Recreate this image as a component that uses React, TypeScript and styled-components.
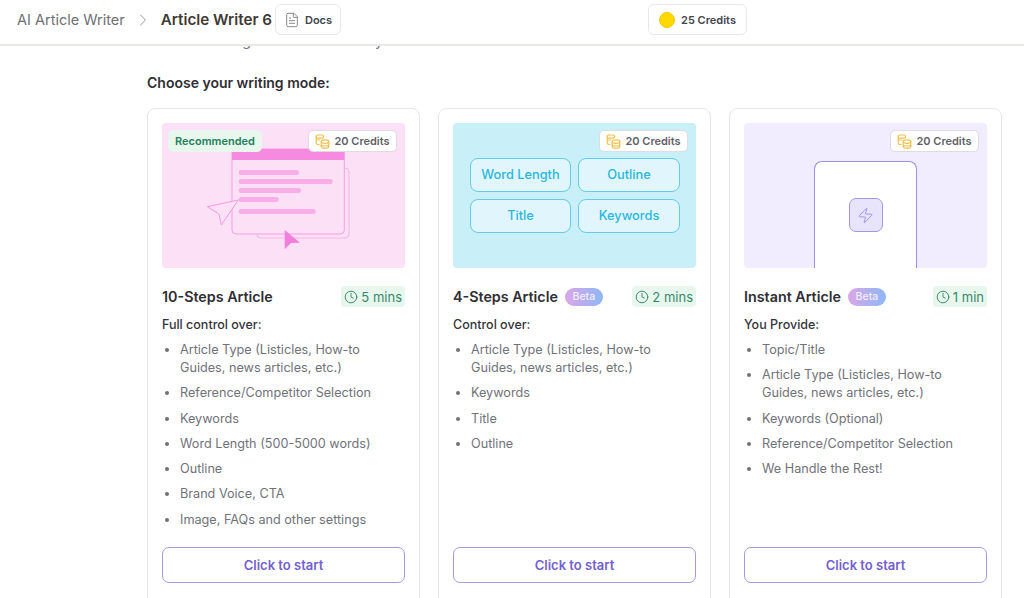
import React from "react";
import styled, { createGlobalStyle } from "styled-components";
import { ChevronRight, Clock, FileText, Zap } from "lucide-react";

const Global = createGlobalStyle`
  html, body { margin: 0; padding: 0; height: 100%; overflow: hidden; background: #fff; }
  body { font-family: Inter, "Liberation Sans", sans-serif; -webkit-font-smoothing: antialiased; }
  #root { height: 100%; }
  * { box-sizing: border-box; }
`;

const Page = styled.div`
  height: 598px;
  width: 1024px;
  display: flex;
  flex-direction: column;
  overflow: hidden;
`;
const Header = styled.header`
  flex: none;
  height: 46px;
  display: grid;
  grid-template-columns: 648px auto;
  align-items: start;
  padding-top: 4px;
  border-bottom: 2px solid #e9e9e6;
  background: #fff;
`;
const Crumbs = styled.div`
  display: flex;
  align-items: center;
  height: 31px;
  padding-left: 17px;
`;
const CrumbRoot = styled.span`
  font-size: 14.5px;
  color: #6f7074;
`;
const CrumbArrow = styled.span`
  display: flex;
  margin: 0 8px 0 8px;
  color: #8b8b8f;
`;
const CrumbCurrent = styled.span`
  font-size: 15.2px;
  font-weight: 600;
  color: #3f3a34;
  margin-right: 3px;
`;
const HeaderButton = styled.div<{ $w: number; $gap: number }>`
  width: ${(p) => p.$w}px;
  height: 31px;
  display: flex;
  align-items: center;
  justify-content: center;
  gap: ${(p) => p.$gap}px;
  border: 1px solid #e8e8ea;
  border-radius: 6px;
  font-size: 11px;
  font-weight: 600;
  color: #44444c;
  background: #fff;
`;
const Coin = styled.span`
  width: 16px;
  height: 16px;
  border-radius: 50%;
  background: #ffd800;
  border: 1px solid #f6ca00;
`;
const Main = styled.main`
  flex: 1;
  overflow: hidden;
  padding-left: 147px;
`;
const Clipped = styled.div`
  margin-top: -14px;
  height: 18px;
  line-height: 17px;
  font-size: 14px;
  color: #6b7280;
  white-space: nowrap;
`;
const Heading = styled.h2`
  margin: 24px 0 16px;
  font-size: 14px;
  line-height: 18px;
  font-weight: 600;
  color: #2f2f33;
`;
const Cards = styled.div`
  display: flex;
  gap: 18px;
`;
const Card = styled.section`
  width: 273px;
  height: 510px;
  flex: none;
  display: flex;
  flex-direction: column;
  padding: 14px 14px 0 14px;
  border: 1px solid #e7e7e9;
  border-radius: 8px;
  background: #fff;
`;
const Art = styled.div<{ $bg: string }>`
  position: relative;
  flex: none;
  height: 145px;
  border-radius: 4px;
  background: ${(p) => p.$bg};
  overflow: hidden;
`;
const CreditTag = styled.div`
  position: absolute;
  top: 7px;
  right: 8px;
  width: 89px;
  height: 22px;
  display: flex;
  align-items: center;
  justify-content: center;
  gap: 4px;
  border: 1px solid #dcdce2;
  border-radius: 5px;
  background: #fff;
  font-size: 11px;
  font-weight: 600;
  color: #5f5f68;
`;
const RecommendedTag = styled.div`
  position: absolute;
  top: 7px;
  left: 6px;
  width: 94px;
  height: 22px;
  display: flex;
  align-items: center;
  justify-content: center;
  border-radius: 5px;
  background: #e8f7ee;
  font-size: 11px;
  font-weight: 600;
  color: #23805a;
`;
const Illustration = styled.svg`
  display: block;
`;
const Chips = styled.div`
  display: grid;
  grid-template-columns: 101px 102px;
  grid-auto-rows: 34px;
  gap: 7px 7px;
  padding: 35px 0 0 17px;
`;
const Chip = styled.div`
  display: flex;
  align-items: center;
  justify-content: center;
  padding-bottom: 1px;
  border: 1px solid #62cce9;
  border-radius: 8px;
  background: #e0f6fc;
  font-size: 12.8px;
  font-weight: 500;
  color: #2cb6dc;
`;
const Frame = styled.div`
  width: 103px;
  height: 107px;
  margin: 38px auto 0;
  padding-top: 36px;
  display: flex;
  justify-content: center;
  align-items: flex-start;
  border: 1px solid #9d8ee6;
  border-bottom: none;
  border-radius: 8px 8px 0 0;
  background: #fff;
`;
const BoltBox = styled.div`
  width: 34px;
  height: 34px;
  display: flex;
  align-items: center;
  justify-content: center;
  border: 1px solid #a496e6;
  border-radius: 7px;
  background: #e8e4fc;
  color: #9486e0;
`;
const TitleRow = styled.div`
  flex: none;
  display: flex;
  align-items: center;
  height: 21px;
  margin-top: 18px;
`;
const CardTitle = styled.h3`
  margin: 0;
  font-size: 14.3px;
  font-weight: 600;
  color: #2f2f35;
`;
const Beta = styled.span`
  margin-left: 7px;
  width: 38px;
  height: 18px;
  display: flex;
  align-items: center;
  justify-content: center;
  border-radius: 9px;
  background: linear-gradient(90deg, #dba6e8, #8db8f6);
  color: #f3ecfd;
  font-size: 10.5px;
  font-weight: 500;
`;
const Time = styled.span`
  margin-left: auto;
  height: 21px;
  padding: 0 3px;
  display: flex;
  align-items: center;
  gap: 3px;
  border-radius: 4px;
  background: #e8f7ee;
  color: #37896a;
  font-size: 13px;
`;
const Lead = styled.p`
  margin: 9px 0 0;
  flex: none;
  font-size: 12.5px;
  line-height: 18px;
  font-weight: 500;
  color: #34343a;
`;
const Items = styled.ul`
  flex: none;
  height: 195px;
  margin: 7px 0 0;
  padding: 0 0 0 18px;
  font-size: 12.65px;
  line-height: 18px;
  color: #70727a;
`;
const Item = styled.li`
  margin-bottom: 7.3px;
  &::marker { color: #70727a; }
`;
const Start = styled.button`
  flex: none;
  height: 36px;
  margin-top: 11px;
  border: 1px solid #a598e6;
  border-radius: 7px;
  background: #fff;
  font-family: inherit;
  font-size: 13px;
  font-weight: 600;
  color: #7360cf;
`;

const CreditsIcon = () => (
  <svg width="15" height="15" viewBox="0 0 15 15" fill="none" stroke="#f0c04e" strokeWidth="1.2">
    <rect x="1.2" y="1" width="7.5" height="3.2" rx="1.6" />
    <path d="M1.2 2.6v6.5c0 .8.7 1.4 1.5 1.4h1.8M1.2 6h4" />
    <ellipse cx="10" cy="7.6" rx="3.8" ry="1.8" />
    <path d="M6.2 7.6v4.8c0 1 1.7 1.8 3.8 1.8s3.8-.8 3.8-1.8V7.6M6.2 10.2c0 1 1.700 1.8 3.8 1.8s3.8-.8 3.8-1.8" />
  </svg>
);

const WindowArt = () => (
  <Illustration width="243" height="145" viewBox="0 0 243 145" fill="none">
    <rect x="94.7" y="45" width="92.3" height="70" rx="4" stroke="#f8b4e8" strokeWidth="1" />
    <rect x="70" y="26" width="112.3" height="85" rx="4" fill="#fbe0f6" stroke="#f69fe2" strokeWidth="1" />
    <path d="M70 37V30a4 4 0 0 1 4-4h104.300a4 4 0 0 1 4 4v7z" fill="#f68ae0" />
    <g fill="#f9aee8">
      <rect x="76.700" y="47" width="60.300" height="5" rx="2.500" />
      <rect x="76.700" y="56" width="94" height="5" rx="2.500" />
      <rect x="76.700" y="65" width="62.300" height="5" rx="2.500" />
      <rect x="76.700" y="74" width="40" height="5" rx="2.500" />
      <rect x="76.700" y="86" width="77" height="5" rx="2.500" />
    </g>
    <path d="M45.300 83.700 76.300 77 59.300 102 57 91z" fill="#fbe0f6" stroke="#f69be1" strokeWidth="1" strokeLinejoin="round" />
    <path d="M122.700 107 138 119.700 129 120 122.700 126.300z" fill="#f27fdc" />
  </Illustration>
);

type Mode = {
  title: string;
  beta?: boolean;
  time: string;
  lead: string;
  items: string[];
  art: string;
  picture: React.ReactNode;
};

const modes: Mode[] = [
  {
    title: "10-Steps Article",
    time: "5 mins",
    lead: "Full control over:",
    items: [
      "Article Type (Listicles, How-to Guides, news articles, etc.)",
      "Reference/Competitor Selection",
      "Keywords",
      "Word Length (500-5000 words)",
      "Outline",
      "Brand Voice, CTA",
      "Image, FAQs and other settings",
    ],
    art: "#fbe0f6",
    picture: (
      <>
        <WindowArt />
        <RecommendedTag>Recommended</RecommendedTag>
      </>
    ),
  },
  {
    title: "4-Steps Article",
    beta: true,
    time: "2 mins",
    lead: "Control over:",
    items: ["Article Type (Listicles, How-to Guides, news articles, etc.)", "Keywords", "Title", "Outline"],
    art: "#c9eff9",
    picture: (
      <Chips>
        <Chip>Word Length</Chip>
        <Chip>Outline</Chip>
        <Chip>Title</Chip>
        <Chip>Keywords</Chip>
      </Chips>
    ),
  },
  {
    title: "Instant Article",
    beta: true,
    time: "1 min",
    lead: "You Provide:",
    items: [
      "Topic/Title",
      "Article Type (Listicles, How-to Guides, news articles, etc.)",
      "Keywords (Optional)",
      "Reference/Competitor Selection",
      "We Handle the Rest!",
    ],
    art: "#f1edfe",
    picture: (
      <Frame>
        <BoltBox>
          <Zap size={17} strokeWidth={1.2} />
        </BoltBox>
      </Frame>
    ),
  },
];

export default function App() {
  return (
    <Page>
      <Global />
      <Header>
        <Crumbs>
          <CrumbRoot>AI Article Writer</CrumbRoot>
          <CrumbArrow>
            <ChevronRight size={20} strokeWidth={1.1} />
          </CrumbArrow>
          <CrumbCurrent>Article Writer 6</CrumbCurrent>
          <HeaderButton $w={66} $gap={5}>
            <FileText size={16} strokeWidth={1.3} color="#77777c" />
            Docs
          </HeaderButton>
        </Crumbs>
        <HeaderButton $w={99} $gap={6}>
          <Coin />
          25 Credits
        </HeaderButton>
      </Header>
      <Main>
        <Clipped>Create amazing articles in one easy</Clipped>
        <Heading>Choose your writing mode:</Heading>
        <Cards>
          {modes.map((m) => (
            <Card key={m.title}>
              <Art $bg={m.art}>
                {m.picture}
                <CreditTag>
                  <CreditsIcon />
                  20 Credits
                </CreditTag>
              </Art>
              <TitleRow>
                <CardTitle>{m.title}</CardTitle>
                {m.beta && <Beta>Beta</Beta>}
                <Time>
                  <Clock size={14} strokeWidth={1.6} />
                  {m.time}
                </Time>
              </TitleRow>
              <Lead>{m.lead}</Lead>
              <Items>
                {m.items.map((i) => (
                  <Item key={i}>{i}</Item>
                ))}
              </Items>
              <Start>Click to start</Start>
            </Card>
          ))}
        </Cards>
      </Main>
    </Page>
  );
}
